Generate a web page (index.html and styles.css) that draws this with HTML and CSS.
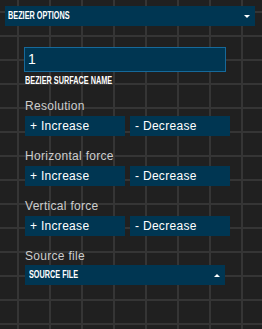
FILE: index.html
```html
<!DOCTYPE html>
<html lang="en">
<head>
  <meta charset="utf-8" />
  <title>Bezier Options</title>
  <link rel="stylesheet" href="styles.css">
</head>
<body>

<div class="panel">
  <div class="group-bar">
    <span class="caps">BEZIER OPTIONS</span>
    <span class="arrow-down"></span>
  </div>

  <div class="group-content">
    <div class="textfield">1</div>
    <div class="field-label"><span class="caps">BEZIER SURFACE NAME</span></div>

    <div class="control">
      <div class="label">Resolution</div>
      <div class="buttons">
        <button type="button">+ Increase</button>
        <button type="button">- Decrease</button>
      </div>
    </div>

    <div class="control">
      <div class="label">Horizontal force</div>
      <div class="buttons">
        <button type="button">+ Increase</button>
        <button type="button">- Decrease</button>
      </div>
    </div>

    <div class="control">
      <div class="label">Vertical force</div>
      <div class="buttons">
        <button type="button">+ Increase</button>
        <button type="button">- Decrease</button>
      </div>
    </div>

    <div class="control">
      <div class="label">Source file</div>
      <div class="dropdown">
        <span class="caps">SOURCE FILE</span>
        <span class="arrow-up"></span>
      </div>
    </div>
  </div>
</div>

</body>
</html>
```

FILE: styles.css
```css
html, body {
  margin: 0;
  height: 100%;
}

body {
  font-family: "Liberation Sans", Arial, sans-serif;
  background-color: #202020;
  background-image:
    repeating-linear-gradient(90deg, transparent 0, transparent 17px, #353535 17px, #353535 19px, transparent 19px, transparent 32px),
    repeating-linear-gradient(180deg, transparent 0, transparent 11px, #353535 11px, #353535 13px, transparent 13px, transparent 24px);
}

.panel {
  padding-top: 6px;
  margin-left: 5px;
  width: 250px;
}

/* narrow pixel-style caps used by the controlP5 labels */
.caps {
  display: inline-block;
  font-family: "Liberation Sans", Arial, sans-serif;
  font-weight: bold;
  font-size: 10px;
  line-height: 10px;
  color: #ffffff;
  white-space: nowrap;
  transform: scaleX(0.73);
  transform-origin: left center;
}

.group-bar {
  height: 20px;
  background-color: #003652;
  display: flex;
  align-items: center;
  padding: 0 5px 0 3px;
}

.arrow-down {
  margin-left: auto;
  width: 0;
  height: 0;
  border-left: 3px solid transparent;
  border-right: 3px solid transparent;
  border-top: 3px solid #ffffff;
}

.arrow-up {
  margin-left: auto;
  width: 0;
  height: 0;
  border-left: 3px solid transparent;
  border-right: 3px solid transparent;
  border-bottom: 3px solid #ffffff;
}

.group-content {
  padding-left: 19px;
}

.textfield {
  margin-top: 21px;
  width: 202px;
  height: 25px;
  box-sizing: border-box;
  border: 1px solid #16699a;
  background-color: #003652;
  color: #ffffff;
  font-size: 14px;
  line-height: 23px;
  padding-left: 3px;
}

.field-label {
  display: flex;
  height: 10px;
  margin: 4px 0 1px 1px;
}

.control {
  margin-top: 13px;
  margin-left: 1px;
}

.control .label {
  font-size: 12px;
  line-height: 14px;
  height: 14px;
  color: #cdcdcd;
  margin-bottom: 3px;
  letter-spacing: 0.3px;
}

.buttons {
  display: flex;
  gap: 5px;
}

.buttons button {
  width: 100px;
  height: 20px;
  border: none;
  margin: 0;
  padding: 0 0 0 5px;
  background-color: #003652;
  color: #ffffff;
  font-family: "Liberation Sans", Arial, sans-serif;
  font-size: 12px;
  letter-spacing: 0.3px;
  text-align: left;
}

.dropdown {
  margin-top: -1px;
  width: 200px;
  height: 20px;
  box-sizing: border-box;
  background-color: #003652;
  display: flex;
  align-items: center;
  padding: 0 5px 0 4px;
}
```
